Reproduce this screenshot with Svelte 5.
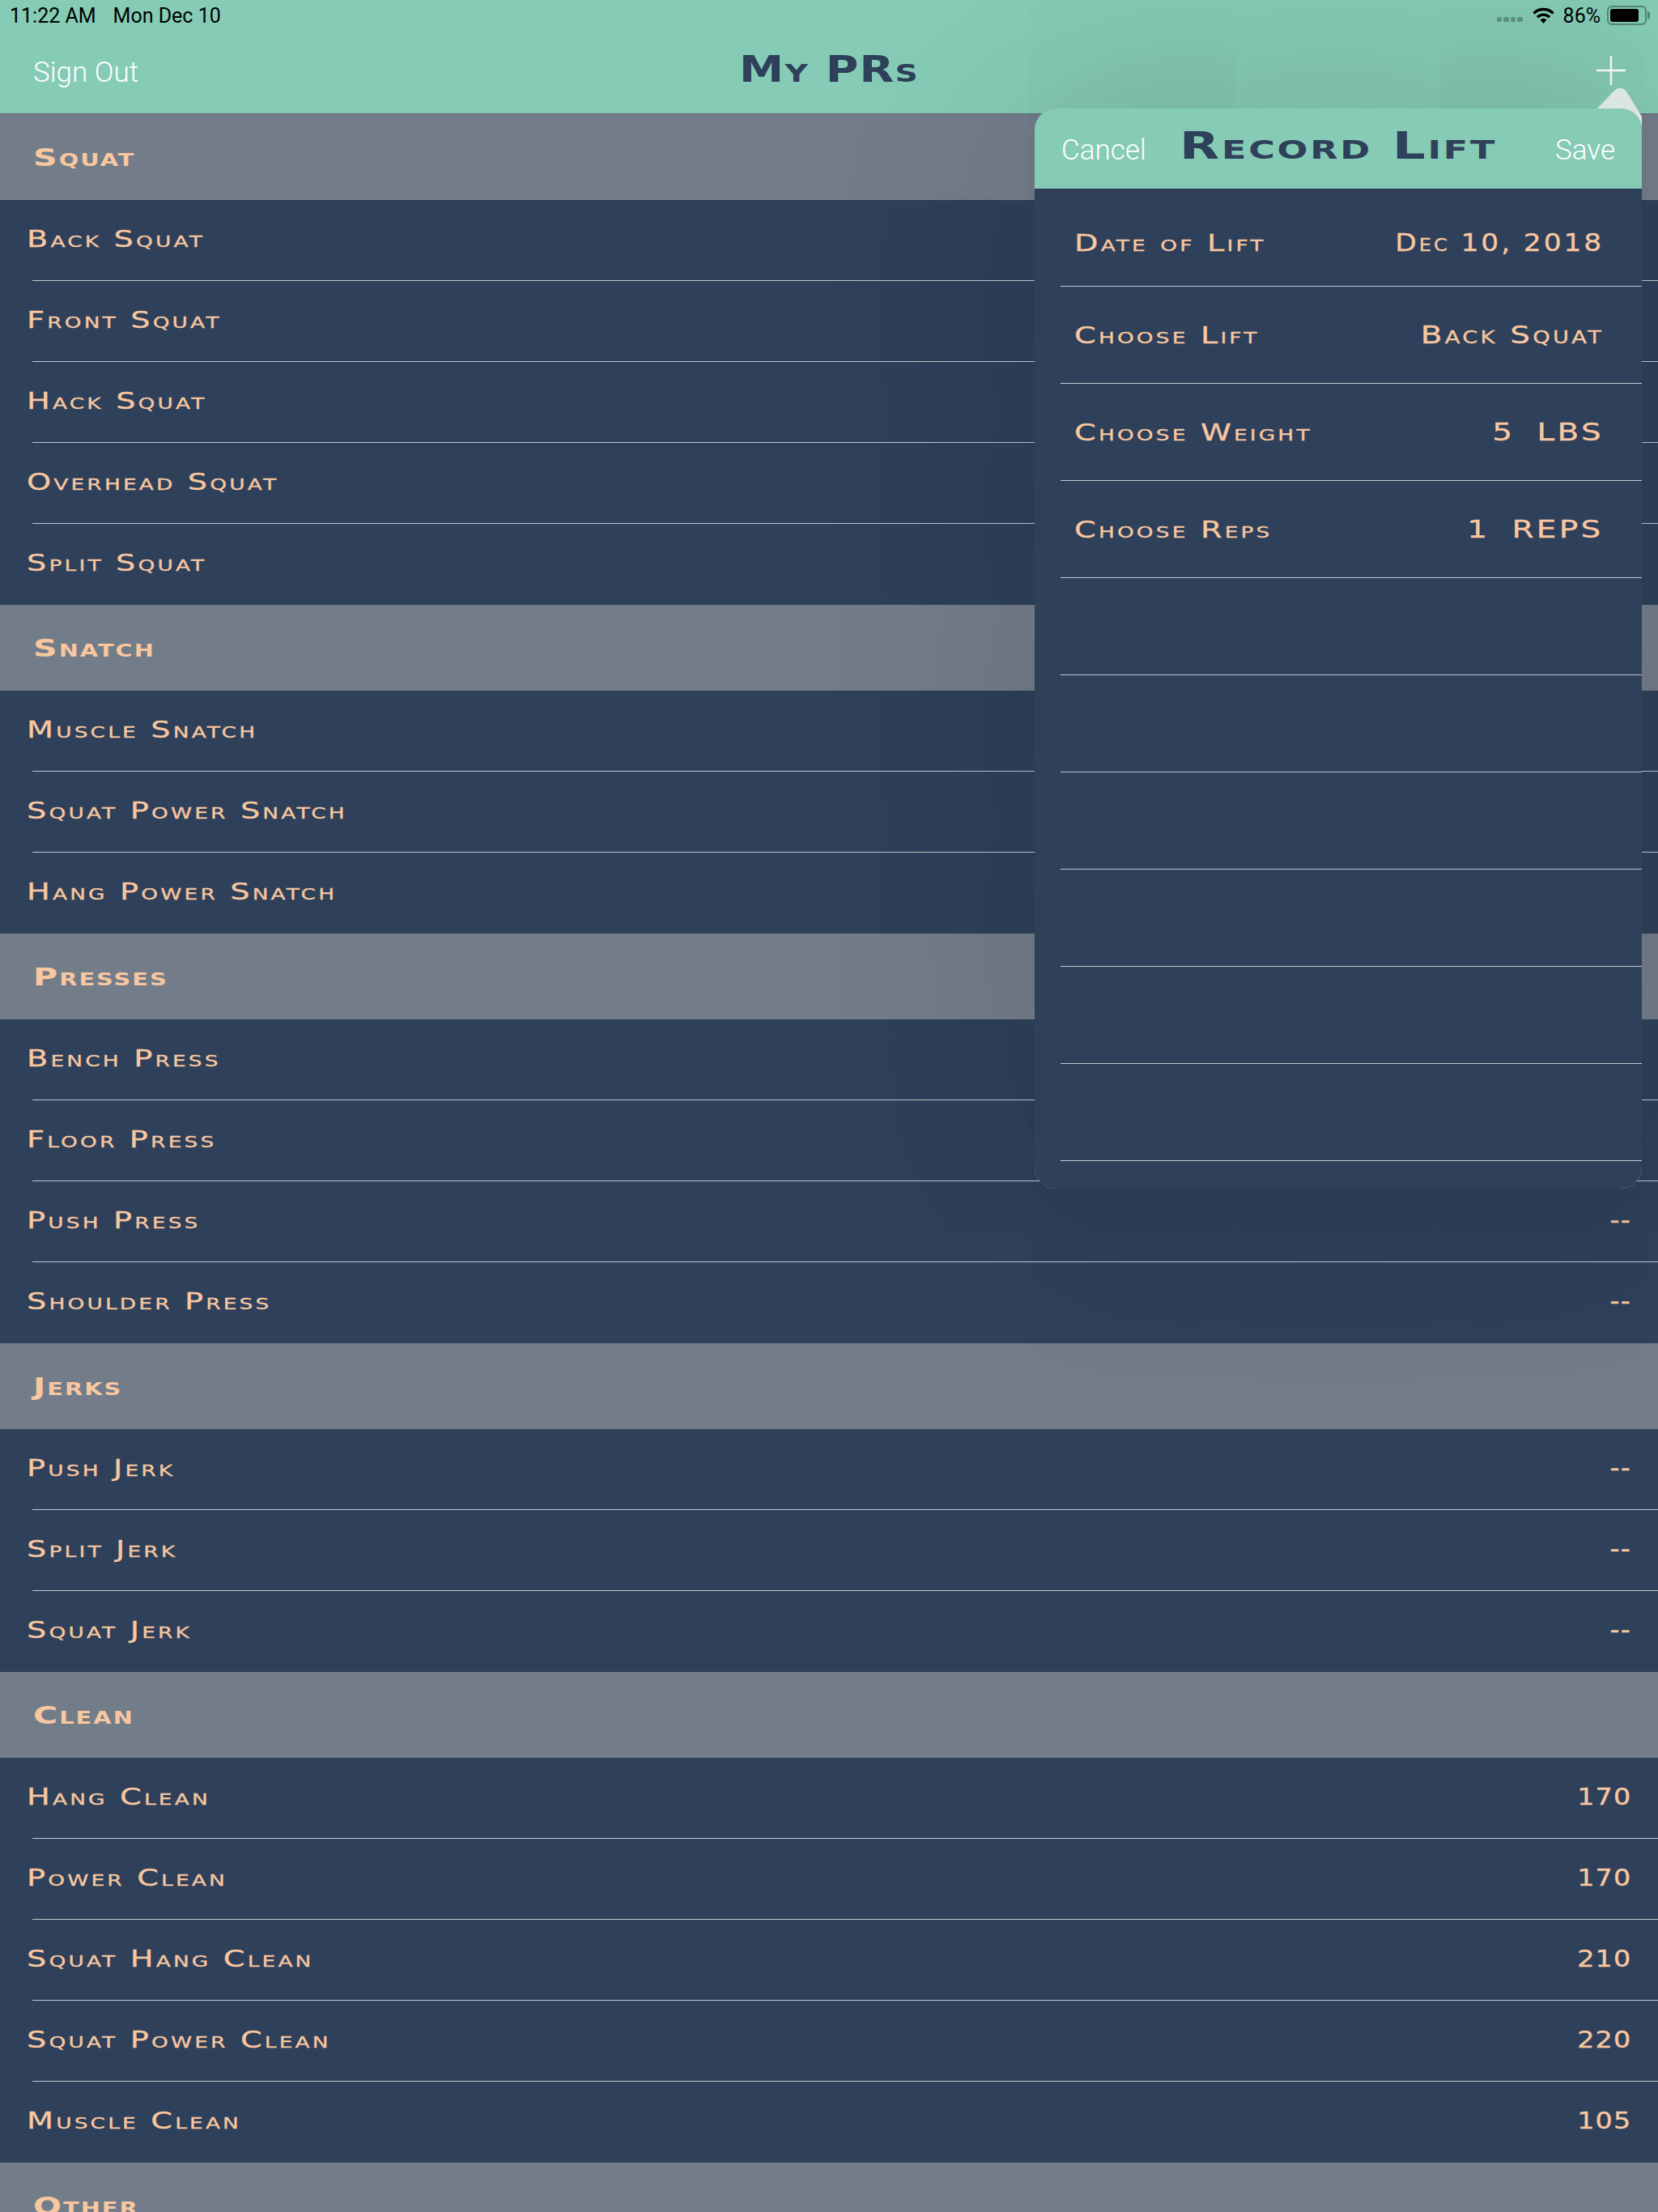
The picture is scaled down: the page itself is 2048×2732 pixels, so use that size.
<script>
  const groups = [
    { name: "Squat", lifts: [["Back Squat", "--"], ["Front Squat", "--"], ["Hack Squat", "--"], ["Overhead Squat", "--"], ["Split Squat", "--"]] },
    { name: "Snatch", lifts: [["Muscle Snatch", "--"], ["Squat Power Snatch", "--"], ["Hang Power Snatch", "--"]] },
    { name: "Presses", lifts: [["Bench Press", "--"], ["Floor Press", "--"], ["Push Press", "--"], ["Shoulder Press", "--"]] },
    { name: "Jerks", lifts: [["Push Jerk", "--"], ["Split Jerk", "--"], ["Squat Jerk", "--"]] },
    { name: "Clean", lifts: [["Hang Clean", "170"], ["Power Clean", "170"], ["Squat Hang Clean", "210"], ["Squat Power Clean", "220"], ["Muscle Clean", "105"]] },
    { name: "Other", lifts: [] }
  ];
  const form = [
    { label: "Date of Lift", value: "Dec 10, 2018", narrow: true },
    { label: "Choose Lift", value: "Back Squat" },
    { label: "Choose Weight", value: "5", unit: "LBS" },
    { label: "Choose Reps", value: "1", unit: "REPS" },
    {}, {}, {}, {}, {}, {}
  ];
</script>

<div class="page">
  <header>
    <div class="status">
      <span>11:22 AM</span>
      <span class="date">Mon Dec 10</span>
      <div class="status-right">
        <div class="dots"><i></i><i></i><i></i><i></i></div>
        <svg class="wifi" width="27" height="20" viewBox="0 0 27 20">
          <path d="M1.5 7.5a17 17 0 0 1 24 0" fill="none" stroke="#000" stroke-width="3.4" />
          <path d="M6 12.2a10.6 10.6 0 0 1 15 0" fill="none" stroke="#000" stroke-width="3.4" />
          <path d="M9.6 15.4a5.6 5.6 0 0 1 7.8 0L13.5 20z" fill="#000" />
        </svg>
        <span>86%</span>
        <div class="battery"><div class="charge"></div></div>
      </div>
    </div>
    <div class="nav">
      <span class="sign-out">Sign Out</span>
      <h1>My PRs</h1>
      <svg class="plus" width="36" height="36" viewBox="0 0 36 36">
        <path d="M18 0v36M0 18h36" stroke="#fff" stroke-width="2.4" />
      </svg>
    </div>
  </header>

  <main>
    {#each groups as group}
      <section>
        <h2><span>{group.name}</span></h2>
        {#each group.lifts as lift, i}
          <div class="row" class:last={i === group.lifts.length - 1}>
            <span class="name">{lift[0]}</span>
            <span class="num">{lift[1]}</span>
          </div>
        {/each}
      </section>
    {/each}
  </main>

  <div class="popover">
    <svg class="arrow" width="62" height="60" viewBox="0 0 62 60">
      <path d="M4 29 L25 7 Q34 -2 41 7 L60 38 V60 H4Z" fill="#dbe5e3" />
    </svg>
    <div class="panel">
      <div class="pop-head">
        <span class="cancel">Cancel</span>
        <h3>Record Lift</h3>
        <span class="save">Save</span>
      </div>
      <div class="pop-body">
        {#each form as field, i}
          <div class="field" class:first={i === 0}>
            <div class="field-in">
              <span class="name">{field.label ?? ""}</span>
              <span class="val" class:narrow={field.narrow}>{field.value ?? ""}{#if field.unit}<b class="unit">{field.unit}</b>{/if}</span>
            </div>
          </div>
        {/each}
      </div>
    </div>
  </div>
</div>

<style>
  :global(body) {
    margin: 0;
    background: #2e405a;
  }
  .page {
    position: relative;
    height: 2732px;
    overflow: hidden;
    font-family: "DejaVu Sans", "Liberation Sans", sans-serif;
    font-variant: small-caps;
    color: #f8c7a0;
  }
  header {
    height: 140px;
    background: #85cbb5;
    border-bottom: 1px solid #5f6b78;
    display: flex;
    flex-direction: column;
  }
  .status {
    height: 38px;
    padding: 0 14px 0 12px;
    display: flex;
    align-items: center;
    font: 25px Roboto, sans-serif;
    color: #000;
  }
  .date {
    margin-left: 21px;
  }
  .status-right {
    margin-left: auto;
    display: flex;
    align-items: center;
  }
  .dots {
    display: flex;
    gap: 2px;
    margin: 10px 12px 0 0;
  }
  .dots i {
    width: 6.5px;
    height: 6px;
    border-radius: 2px;
    background: #5e9484;
  }
  .wifi {
    margin-right: 11px;
  }
  .battery {
    position: relative;
    width: 49px;
    height: 24px;
    margin-left: 8px;
    box-sizing: border-box;
    border: 2px solid #56867a;
    border-radius: 6px;
    padding: 2px;
  }
  .battery::after {
    content: "";
    position: absolute;
    right: -6px;
    top: 5px;
    width: 3px;
    height: 10px;
    background: #56867a;
    border-radius: 0 3px 3px 0;
  }
  .charge {
    width: 35px;
    height: 100%;
    background: #000;
    border-radius: 3px;
  }
  .nav {
    flex: 1;
    display: grid;
    grid-template-columns: 1fr auto 1fr;
    align-items: center;
    padding: 0 40px 0 41px;
  }
  .sign-out {
    font: 300 35px Roboto, sans-serif;
    color: #fff;
  }
  h1 {
    margin: 0 0 8px;
    font-size: 44px;
    font-weight: 700;
    letter-spacing: 1px;
    color: #2e405a;
    transform: scaleX(1.26);
  }
  .plus {
    justify-self: end;
    margin-top: -4px;
  }
  h2 {
    margin: 0;
    height: 106px;
    box-sizing: border-box;
    padding: 0 41px;
    display: flex;
    align-items: center;
    background: #737d8a;
    font-size: 30px;
    font-weight: 700;
    letter-spacing: 1.5px;
  }
  h2 span {
    transform: scaleX(1.37);
    transform-origin: left center;
  }
  .row {
    height: 100px;
    box-sizing: border-box;
    padding: 0 33px 4px 33px;
    display: flex;
    justify-content: space-between;
    align-items: center;
    position: relative;
    font-size: 29px;
    background: #2e405a;
  }
  .name {
    display: inline-block;
    letter-spacing: 2.4px;
    transform: scaleX(1.32);
    transform-origin: left center;
    -webkit-text-stroke: 0.3px currentColor;
  }
  .num {
    display: inline-block;
    letter-spacing: 1px;
    transform: scaleX(1.15);
    transform-origin: right center;
    -webkit-text-stroke: 0.4px currentColor;
  }
  .row::after {
    content: "";
    position: absolute;
    left: 40px;
    right: 0;
    bottom: 0;
    height: 1px;
    background: #c3c8cf;
  }
  .row.last::after {
    display: none;
  }
  .popover {
    position: absolute;
    left: 1278px;
    top: 134px;
    width: 750px;
    height: 1334px;
    border-radius: 26px;
    box-shadow: 0 0 700px rgba(0, 0, 0, 0.2);
  }
  .arrow {
    position: absolute;
    left: 690px;
    top: -28px;
  }
  .panel {
    position: relative;
    height: 100%;
    border-radius: 26px;
    background: #8794a3;
    overflow: hidden;
    display: flex;
    flex-direction: column;
  }
  .pop-head {
    height: 100px;
    box-sizing: border-box;
    padding: 0 33px;
    display: grid;
    grid-template-columns: 1fr auto 1fr;
    align-items: center;
    background: #85cbb5;
    border-bottom: 1px solid #26364c;
    font: 300 35px Roboto, sans-serif;
    color: #fff;
    font-variant: normal;
    border-radius: 26px 26px 0 0;
  }
  .cancel,
  .save {
    margin-top: 4px;
  }
  .save {
    justify-self: end;
  }
  h3 {
    margin: 0 0 8px;
    font-family: "DejaVu Sans", "Liberation Sans", sans-serif;
    font-variant: small-caps;
    font-size: 46px;
    font-weight: 700;
    letter-spacing: 2px;
    color: #2e405a;
    transform: scaleX(1.39);
  }
  .pop-body {
    flex: 1;
    background: #2e405a;
    border-radius: 0 0 26px 26px;
    padding-left: 32px;
  }
  .field {
    height: 120px;
    box-sizing: border-box;
    border-bottom: 1px solid #c3c8cf;
  }
  .field-in {
    height: 100%;
    box-sizing: border-box;
    padding: 0 47px 0 17px;
    display: flex;
    justify-content: space-between;
    align-items: center;
    font-size: 29px;
  }
  .field.first .field-in {
    padding-top: 12px;
  }
  .val {
    display: inline-block;
    font-size: 30px;
    letter-spacing: 2.5px;
    transform: scaleX(1.3);
    transform-origin: right center;
    -webkit-text-stroke: 0.3px currentColor;
  }
  .val.narrow {
    transform: scaleX(1.15);
  }
  .unit {
    font-weight: 400;
    margin-left: 21px;
  }
</style>
